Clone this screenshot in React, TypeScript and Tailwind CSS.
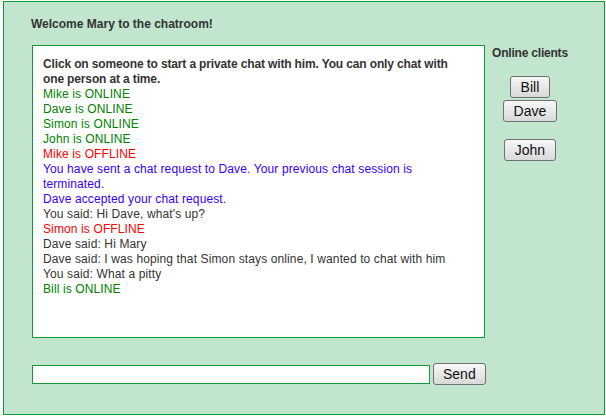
import React from "react";

type Msg = { text: string; cls: string };

const messages: Msg[] = [
  { text: "Mike is ONLINE", cls: "text-[#008000]" },
  { text: "Dave is ONLINE", cls: "text-[#008000]" },
  { text: "Simon is ONLINE", cls: "text-[#008000]" },
  { text: "John is ONLINE", cls: "text-[#008000]" },
  { text: "Mike is OFFLINE", cls: "text-[#ff0000]" },
  { text: "You have sent a chat request to Dave. Your previous chat session is terminated.", cls: "text-[#3300ff]" },
  { text: "Dave accepted your chat request.", cls: "text-[#3300ff]" },
  { text: "You said: Hi Dave, what's up?", cls: "text-[#333333]" },
  { text: "Simon is OFFLINE", cls: "text-[#ff0000]" },
  { text: "Dave said: Hi Mary", cls: "text-[#333333]" },
  { text: "Dave said: I was hoping that Simon stays online, I wanted to chat with him", cls: "text-[#333333]" },
  { text: "You said: What a pitty", cls: "text-[#333333]" },
  { text: "Bill is ONLINE", cls: "text-[#008000]" },
];

const btnBase =
  "h-[22px] border border-[#707070] rounded-[3px] bg-gradient-to-b from-[#f7f7f7] to-[#d9d9d9] text-[14px] leading-[18px] text-[#111111]";
const btn = btnBase + " px-[10px]";

export default function App() {
  return (
    <div className="font-['Liberation_Sans',Arial,sans-serif]">
      <div className="mt-[1px] ml-[3px] w-[602px] h-[414px] border border-[#14993a] bg-[#c1e6cd] pl-[28px] pt-[15px]">
        <div className="text-[12px] leading-[15px] font-bold text-[#333333] -ml-[1px]">
          Welcome Mary to the chatroom!
        </div>
        <div className="flex mt-[13px]">
          <div className="w-[453px] h-[293px] border border-[#14993a] bg-white pl-[10px] pr-[20px] pt-[11px] text-[12px] leading-[15px] tracking-[0.12px]">
            <div className="font-bold text-[#333333] tracking-[-0.14px]">
              Click on someone to start a private chat with him. You can only chat with one person at a time.
            </div>
            {messages.map((m, i) => (
              <div key={i} className={m.cls}>
                {m.text}
              </div>
            ))}
          </div>
          <div className="ml-[7px] flex flex-col items-center pt-[1px]">
            <div className="text-[12px] leading-[15px] font-bold text-[#333333] tracking-[-0.2px]">Online clients</div>
            <button className={btn + " mt-[15px]"}>Bill</button>
            <button className={btn + " mt-[2px]"}>Dave</button>
            <button className={btn + " mt-[17px]"}>John</button>
          </div>
        </div>
        <div className="flex items-center mt-[25px]">
          <input className="w-[398px] h-[19px] border border-[#14993a] bg-white outline-none" />
          <button className={btnBase + " px-[9px] ml-[3px]"}>Send</button>
        </div>
      </div>
    </div>
  );
}
